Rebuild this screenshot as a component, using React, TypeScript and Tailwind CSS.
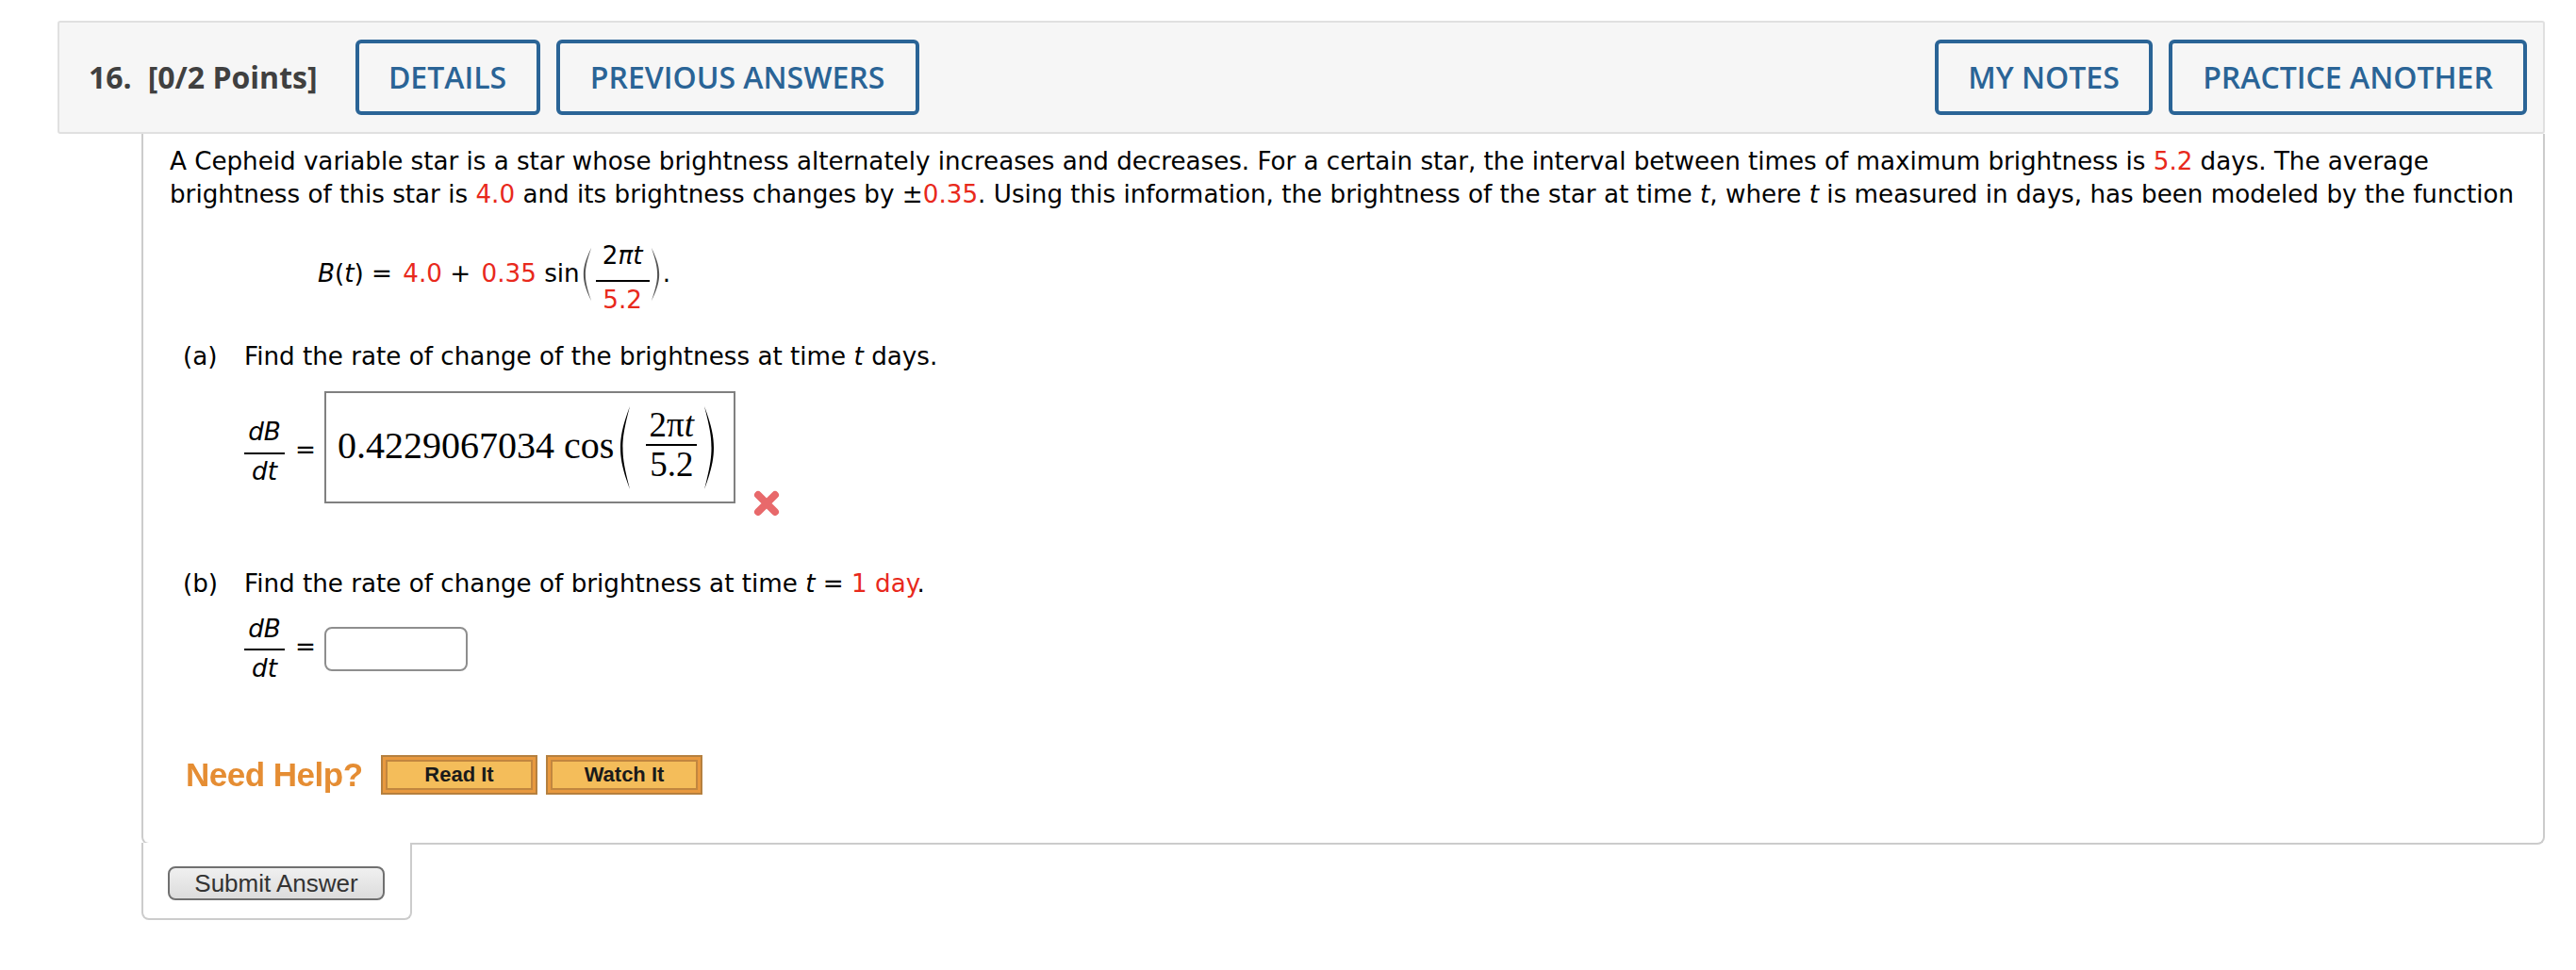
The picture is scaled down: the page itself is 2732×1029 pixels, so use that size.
const sans = "font-['DejaVu_Sans',sans-serif]";

/* ─── Stretchy bracket for the fractions ─── */
function Paren({ side, className }: { side: "left" | "right"; className: string }) {
  return (
    <svg className={className} viewBox="0 0 12 90" fill="none" preserveAspectRatio="none">
      <path
        d={side === "left" ? "M11 1C3 22 1 34 1 45s2 23 10 44C5 66 3.500 56 3.500 45S5 24 11 1z" : "M1 1c8 21 10 33 10 44S9 68 1 89c6-23 7.500-33 7.500-44S7 24 1 1z"}
        fill="currentColor"
      />
    </svg>
  );
}

function HeadButton({ label, width }: { label: string; width: string }) {
  return (
    <button
      type="button"
      className={`${width} h-[80px] shrink-0 rounded-[6px] border-[4px] border-[#2a6496] text-[32px] font-semibold text-[#2a6496] font-['Open_Sans',sans-serif]`}
    >
      {label}
    </button>
  );
}

function Red({ children, className }: { children: React.ReactNode; className?: string }) {
  return <span className={`text-[#e8291c] ${className ?? ""}`}>{children}</span>;
}

function Frac({ top, bottom, className }: { top: React.ReactNode; bottom: React.ReactNode; className?: string }) {
  return (
    <span className={`flex w-[43px] flex-col items-center ${className ?? ""}`}>
      <span className="flex h-[42px] items-center italic">{top}</span>
      <span className="h-[2px] w-full bg-black" />
      <span className="flex h-[42px] items-center pb-[4px] italic">{bottom}</span>
    </span>
  );
}

function HelpButton({ label }: { label: string }) {
  return (
    <button
      type="button"
      className="h-[42px] w-[166px] border-[2px] border-[#b5803f] bg-[#e8993f] p-[3px]"
    >
      <span className="flex h-full items-center justify-center border-[2px] border-[#c2863f] bg-[#f4bd5a] text-[22px] font-bold leading-none text-[#1a1a1a] font-['Liberation_Sans',sans-serif]">
        {label}
      </span>
    </button>
  );
}

export default function App() {
  return (
    <div className={`w-[2732px] h-[1029px] bg-white pt-[22px] pl-[61px] text-black ${sans}`}>
      {/* Question header */}
      <div className="flex h-[120px] w-[2638px] items-center rounded-[3px] border-[2px] border-[#e0e0e0] bg-[#f6f6f6] pl-[31px] pr-[17px]">
        <span className="text-[32px] font-bold text-[#404040] font-['Open_Sans',sans-serif]">16.</span>
        <span className="ml-[17px] text-[32px] font-bold text-[#404040] font-['Open_Sans',sans-serif]">[0/2 Points]</span>
        <div className="ml-[40px] flex gap-[17px]">
          <HeadButton label="DETAILS" width="w-[196px]" />
          <HeadButton label="PREVIOUS ANSWERS" width="w-[385px]" />
        </div>
        <div className="ml-auto flex gap-[17px]">
          <HeadButton label="MY NOTES" width="w-[231px]" />
          <HeadButton label="PRACTICE ANOTHER" width="w-[380px]" />
        </div>
      </div>

      {/* Question body */}
      <div className="ml-[89px] h-[754px] w-[2549px] rounded-b-[8px] border-x-[2px] border-b-[2px] border-[#cccccc] pl-[28px] pt-[12px] text-[26.200px] leading-[35px]">
        <p className="whitespace-nowrap tracking-[-0.03px]">
          A Cepheid variable star is a star whose brightness alternately increases and decreases. For a certain star, the interval between times of maximum brightness is <Red>5.2</Red> days. The average
        </p>
        <p className="whitespace-nowrap">
          brightness of this star is <Red>4.0</Red> and its brightness changes by ±<Red>0.35</Red>. Using this information, the brightness of the star at time <i>t</i>, where <i>t</i> is measured in days, has been modeled by the function
        </p>

        <div className="ml-[157px] mt-[29px] flex h-[88px] items-center whitespace-pre">
          <span className="mb-[14px]"><i>B</i>(<i>t</i>) = <Red className="ml-[3px]">4.0</Red> + <Red className="ml-[3px]">0.35</Red> sin</span>
          <Paren side="left" className="mb-[12px] ml-[3px] h-[58px] w-[10px] text-[#555555]" />
          <span className="ml-[4px] flex w-[57px] flex-col items-center">
            <span className="flex h-[40px] items-start leading-[28px]">2<i>πt</i></span>
            <span className="h-[2px] w-full bg-black" />
            <span className="flex h-[38px] items-center"><Red>5.2</Red></span>
          </span>
          <Paren side="right" className="mb-[12px] ml-[1px] h-[58px] w-[10px] text-[#555555]" />
          <span className="mb-[14px] ml-[3px]">.</span>
        </div>

        {/* Part a */}
        <div className="ml-[14px] mt-[20px] flex whitespace-pre">
          <span className="w-[65px]">(a)</span>
          <span>Find the rate of change of the brightness at time <i>t</i> days.</span>
        </div>
        <div className="ml-[79px] mt-[19px] flex items-center">
          <Frac top="dB" bottom="dt" className="mt-[12px]" />
          <span className="mx-[11px] mt-[6px] w-[20px] text-center">=</span>
          <div className="flex h-[119px] w-[436px] items-center border-[2px] border-[#808080] pl-[12px] text-[40px] font-['Liberation_Serif',serif]">
            <span className="mb-[4px] whitespace-pre">0.4229067034 cos</span>
            <Paren side="left" className="ml-[6px] h-[90px] w-[12px]" />
            <span className="mb-[6px] ml-[16px] flex w-[54px] flex-col items-center text-[37px] leading-none">
              <span className="flex h-[40px] items-center">2π<i>t</i></span>
              <span className="h-[2px] w-full bg-black" />
              <span className="flex h-[40px] items-center">5.2</span>
            </span>
            <Paren side="right" className="ml-[7px] h-[90px] w-[12px]" />
          </div>
          <svg className="ml-[19px] -mb-[119px] h-[28px] w-[28px] blur-[0.3px]" viewBox="0 0 28 28">
            <path d="M5 5l18 18M23 5L5 23" stroke="#e8696b" strokeWidth="8" strokeLinecap="round" />
          </svg>
        </div>

        {/* Part b */}
        <div className="ml-[14px] mt-[68px] flex whitespace-pre">
          <span className="w-[65px]">(b)</span>
          <span>Find the rate of change of brightness at time <i>t</i> = <Red>1 day</Red>.</span>
        </div>
        <div className="ml-[79px] mt-[9px] flex items-center">
          <Frac top="dB" bottom="dt" />
          <span className="mx-[11px] mb-[6px] w-[20px] text-center">=</span>
          <div className="mb-[2px] h-[47px] w-[152px] rounded-[8px] border-[2px] border-[#8e8e8e]" />
        </div>

        {/* Help */}
        <div className="ml-[17px] mt-[69px] flex items-center">
          <span className="mb-[2px] w-[207px] text-[35px] font-bold tracking-[-0.5px] text-[#e58d33] blur-[0.5px] font-['Liberation_Sans',sans-serif]">Need Help?</span>
          <div className="flex gap-[9px]">
            <HelpButton label="Read It" />
            <HelpButton label="Watch It" />
          </div>
        </div>
      </div>

      {/* Submit tab */}
      <div className="relative z-10 ml-[89px] -mt-[2px] flex h-[82px] w-[287px] items-start rounded-b-[8px] border-x-[2px] border-b-[2px] border-[#cccccc] bg-white pl-[26px] pt-[25px]">
        <button
          type="button"
          className="h-[36px] w-[230px] rounded-[8px] border-[2px] border-[#707070] bg-gradient-to-b from-[#f0f0f0] to-[#dcdcdc] text-[26px] leading-none text-[#333333] font-['Liberation_Sans',sans-serif]"
        >
          Submit Answer
        </button>
      </div>
    </div>
  );
}
